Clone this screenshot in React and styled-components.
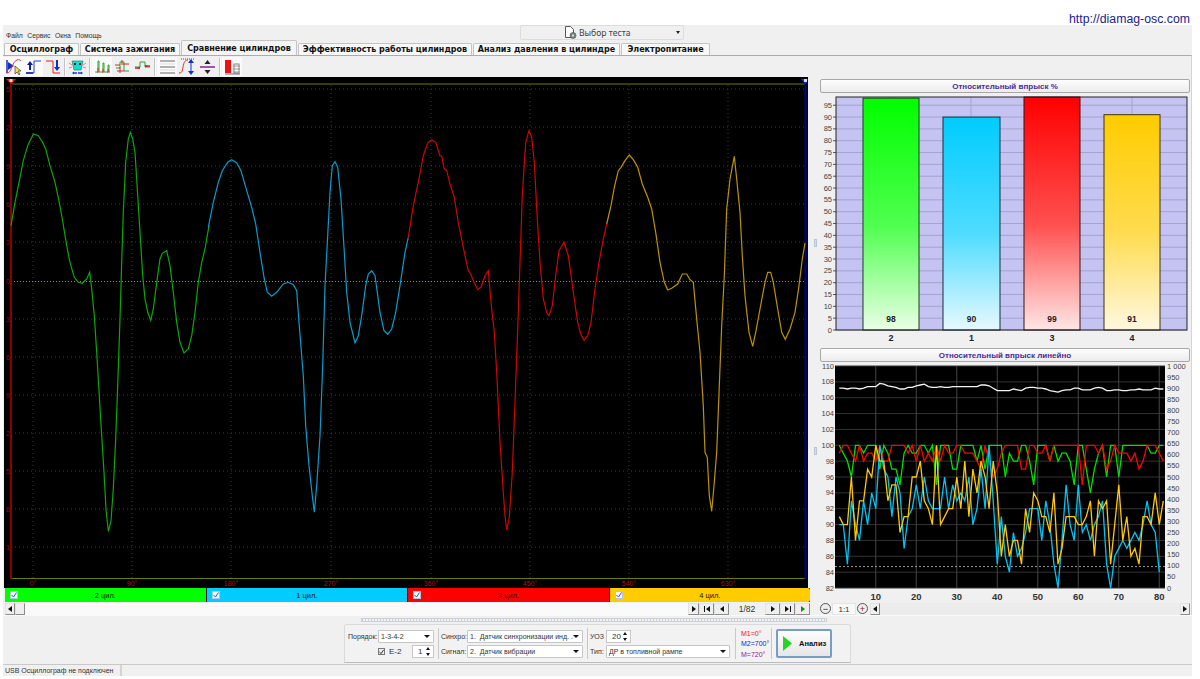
import React from "react";
import styled, { createGlobalStyle } from "styled-components";

const GlobalStyle = createGlobalStyle`
  html, body { margin: 0; padding: 0; background: #fff; }
  body { font-family: "Liberation Sans", Arial, sans-serif; overflow: hidden; }
`;

const Page = styled.div`
  width: 1200px;
  height: 679px;
  display: flex;
  flex-direction: column;
`;

const TopBar = styled.div`
  height: 25px;
  display: flex;
  justify-content: flex-end;
  align-items: flex-end;
  padding-right: 10px;
  box-sizing: border-box;
`;

const SiteLink = styled.a`
  font-size: 12.3px;
  line-height: 15px;
  color: #1c1c8c;
  text-decoration: none;
  position: relative;
  top: 2px;
`;

const Window = styled.div`
  margin: 0 8px 0 3px;
  height: 651px;
  background: #f0f0f0;
  display: flex;
  flex-direction: column;
`;

const MenuRow = styled.div`
  height: 17px;
  display: flex;
  align-items: flex-start;
`;

const Menu = styled.div`
  width: 517px;
  display: flex;
  gap: 4.5px;
  padding: 6px 0 0 3px;
  box-sizing: border-box;
  font-size: 6.8px;
  line-height: 9px;
  color: #333;
`;

const TestSelect = styled.div`
  width: 164px;
  height: 15px;
  box-sizing: border-box;
  border: 1px solid #dcdcdc;
  border-radius: 2px;
  display: flex;
  align-items: center;
  padding-left: 43px;
  gap: 2px;
  font-family: "Noto Sans", sans-serif;
  font-size: 8.6px;
  color: #444;
  position: relative;
`;

const SelectCaret = styled.span`
  position: absolute;
  right: 3px;
  top: 5px;
  border: 2.5px solid transparent;
  border-top: 3px solid #222;
`;

const TabRow = styled.div`
  height: 14px;
  display: flex;
  align-items: flex-end;
  padding-left: 1px;
  gap: 1px;
`;

const Tab = styled.div`
  width: ${(p) => p.$w}px;
  height: ${(p) => (p.$active ? 15 : 12)}px;
  box-sizing: border-box;
  background: ${(p) => (p.$active ? "#f4f4f4" : "#f8f8f8")};
  border: 1px solid #c4c4c4;
  border-bottom: none;
  border-radius: 2px 2px 0 0;
  display: flex;
  align-items: center;
  justify-content: center;
  font-family: "DejaVu Sans", sans-serif;
  font-weight: 700;
  font-size: 8px;
  color: #111;
  white-space: nowrap;
  position: relative;
  z-index: ${(p) => (p.$active ? 1 : 0)};
`;

const TabPanel = styled.div`
  height: 560px;
  box-sizing: border-box;
  border-top: 1px solid #ababab;
  border-right: 1px solid #d4d4d4;
  display: flex;
  flex-direction: column;
`;

const Toolbar = styled.div`
  height: 21px;
  display: flex;
  align-items: center;
  flex: none;
`;

const Tool = styled.div`
  width: 20px;
  height: 19px;
  display: flex;
  align-items: center;
  justify-content: center;
  background: ${(p) => (p.$lit ? "#fafafa" : "transparent")};
`;

const ToolSep = styled.div`
  width: 2px;
  height: 18px;
  margin: 0 ${(p) => p.$m || 1.5}px;
  background: #c2c2c2;
  border-right: 1px solid #fff;
  box-sizing: border-box;
`;

const Workspace = styled.div`
  flex: 1;
  display: flex;
  min-height: 0;
`;

const ScopeColumn = styled.div`
  width: 807px;
  margin-left: 1px;
  flex: none;
  display: flex;
  flex-direction: column;
`;

const ScopeFrame = styled.div`
  height: 511px;
  flex: none;
  svg { display: block; }
`;

const CylinderStrip = styled.div`
  height: 14px;
  margin: 0 1px;
  display: flex;
  flex: none;
  background: #111;
  gap: 1px;
`;

const Cylinder = styled.div`
  flex: 1;
  background: ${(p) => p.$color};
  display: flex;
  align-items: center;
  justify-content: center;
  font-size: 7.5px;
  color: #1c1c00;
  position: relative;
  border-radius: ${(p) => (p.$last ? "0 2px 2px 0" : "0")};
`;

const CheckBox = styled.span`
  position: absolute;
  left: 5px;
  top: 3px;
  width: 8px;
  height: 8px;
  background: #f2f6fc;
  border: 1px solid #b8c4d4;
  box-sizing: border-box;
  display: flex;
  svg { display: block; }
`;

const NavRow = styled.div`
  flex: 1;
  display: flex;
  align-items: stretch;
  margin: 1px 1px 0;
  height: 12px;
`;

const ScrollTrack = styled.div`
  flex: ${(p) => (p.$fill ? 1 : "none")};
  background: ${(p) => p.$bg || "#f9f9f9"};
  display: flex;
  align-items: stretch;
`;

const SquareButton = styled.div`
  width: ${(p) => p.$w || 13}px;
  box-sizing: border-box;
  border: 1px solid #e2e2e2;
  border-right-color: #8c8c8c;
  border-bottom-color: #8c8c8c;
  background: ${(p) => p.$bg || "#efefef"};
  display: flex;
  align-items: center;
  justify-content: center;
  flex: none;
  margin-left: ${(p) => p.$ml || 0}px;
`;

const PageCount = styled.div`
  width: 36px;
  flex: none;
  display: flex;
  align-items: center;
  justify-content: center;
  font-size: 8.5px;
  color: #333;
`;

const Splitter = styled.div`
  width: 9px;
  flex: none;
  position: relative;
`;

const Knob = styled.div`
  position: absolute;
  left: 3px;
  top: ${(p) => p.$top}px;
  width: 3px;
  height: ${(p) => p.$h}px;
  background: #cfe0f2;
  border: 1px solid #b8c4d4;
  box-sizing: border-box;
`;

const Sidebar = styled.div`
  width: 370px;
  flex: none;
  padding-top: 2px;
  box-sizing: border-box;
  display: flex;
  flex-direction: column;
  svg { display: block; overflow: visible; }
`;

const ChartTitle = styled.div`
  height: 14px;
  flex: none;
  margin-bottom: 2px;
  box-sizing: border-box;
  border: 1px solid #a8a8a8;
  border-radius: 2px;
  background: linear-gradient(#fdfdfd, #ececec);
  display: flex;
  align-items: center;
  justify-content: center;
  font-size: 8px;
  font-weight: 700;
  color: #4a2c96;
`;

const ChartFooter = styled.div`
  height: 12px;
  flex: none;
  display: flex;
  align-items: stretch;
`;

const RoundButton = styled.div`
  width: 11px;
  height: 11px;
  box-sizing: border-box;
  border: 1px solid #555;
  border-radius: 50%;
  background: #eee;
  display: flex;
  align-items: center;
  justify-content: center;
  flex: none;
  margin: 0 1px 0 0;
  color: ${(p) => p.$color};
  font-size: 9px;
  line-height: 8px;
`;

const ZoomValue = styled.div`
  width: 24px;
  flex: none;
  margin-right: 1px;
  background: #f8f8f8;
  border: 1px solid #e4e4e4;
  box-sizing: border-box;
  display: flex;
  align-items: center;
  justify-content: center;
  font-size: 8px;
  color: #333;
`;

const BottomArea = styled.div`
  height: 48px;
  flex: none;
  display: flex;
  flex-direction: column;
  align-items: center;
  border-top: 1px solid #fafafa;
`;

const DockHandle = styled.div`
  width: 466px;
  height: 4px;
  margin: 2px 7px 2px 0;
  flex: none;
  box-sizing: border-box;
  border: 1px solid #cfcfcf;
  background: repeating-linear-gradient(90deg, #b8d0ea 0 1px, #f4f4f4 1px 3px);
`;

const ControlPanel = styled.div`
  width: 507px;
  height: 39px;
  flex: none;
  box-sizing: border-box;
  border: 1px solid #dadada;
  border-bottom-color: #bcbcbc;
  border-radius: 3px 3px 0 0;
  padding: 0 0 0 3px;
  display: flex;
  align-items: center;
  background: #f2f2f2;
`;

const FieldGroup = styled.div`
  width: ${(p) => p.$w}px;
  flex: none;
  display: grid;
  grid-template-columns: ${(p) => p.$label}px 1fr;
  grid-template-rows: 13px 13px;
  row-gap: 2px;
  align-items: center;
`;

const FieldLabel = styled.div`
  font-size: 7px;
  color: #333;
  white-space: nowrap;
`;

const SelectBox = styled.div`
  height: 13px;
  box-sizing: border-box;
  background: #fff;
  border: 1px solid #c6c6c6;
  border-radius: 1px;
  display: flex;
  align-items: center;
  padding-left: 2px;
  font-size: 7px;
  color: #333;
  white-space: pre;
  overflow: hidden;
  position: relative;
  &::after {
    content: "";
    position: absolute;
    right: 3px;
    top: 4px;
    border: 3px solid transparent;
    border-top: 3px solid #111;
  }
`;

const SpinBox = styled.div`
  width: ${(p) => p.$w}px;
  height: 13px;
  box-sizing: border-box;
  background: #fff;
  border: 1px solid #c6c6c6;
  display: flex;
  align-items: center;
  padding-left: 5px;
  font-size: 8px;
  color: #333;
  position: relative;
  &::before, &::after {
    content: "";
    position: absolute;
    right: 3px;
    border: 2.5px solid transparent;
  }
  &::before { top: -1px; border-bottom: 3px solid #111; }
  &::after { bottom: -1px; border-top: 3px solid #111; }
`;

const OrderExtras = styled.div`
  display: flex;
  align-items: center;
  justify-content: space-between;
`;

const PlainCheck = styled.label`
  display: flex;
  align-items: center;
  gap: 4px;
  font-size: 8px;
  color: #333;
`;

const PanelCheck = styled.span`
  width: 7px;
  height: 7px;
  box-sizing: border-box;
  border: 1px solid #777;
  background: #eee;
  display: flex;
  svg { display: block; }
`;

const PanelSep = styled.div`
  width: 1px;
  height: 31px;
  background: #c8c8c8;
  flex: none;
  margin: 0 ${(p) => p.$r}px 0 ${(p) => p.$l}px;
`;

const Marks = styled.div`
  width: 30px;
  flex: none;
  display: flex;
  flex-direction: column;
  gap: 1.5px;
`;

const Mark = styled.div`
  font-size: 7px;
  line-height: 9px;
  color: ${(p) => p.$color};
  white-space: nowrap;
`;

const AnalyzeButton = styled.div`
  width: 56px;
  height: 29px;
  flex: none;
  box-sizing: border-box;
  border: 2px solid #7a9cc0;
  border-radius: 2px;
  background: linear-gradient(#fdfdfd, #e6e6e6);
  display: flex;
  align-items: center;
  padding-left: 5px;
  gap: 7px;
  font-size: 7.5px;
  font-weight: 700;
  color: #111;
`;

const StatusBar = styled.div`
  height: 12px;
  flex: none;
  box-sizing: border-box;
  border-top: 1px solid #c8c8c8;
  display: flex;
  font-size: 7px;
  color: #333;
`;

const StatusCell = styled.div`
  width: 119px;
  padding-left: 2px;
  box-sizing: border-box;
  line-height: 11px;
  white-space: nowrap;
  border-right: 2px solid #d4d4d4;
`;

/* ---------- waveform data, read off the picture (zoom coords) ---------- */

const wave = (base, pts) =>
  pts.map(([x, y]) => `${(base + x / 3).toFixed(1)},${(120 + y / 3).toFixed(1)}`).join(" ");

const greenWave = wave(5, [[18,320],[30,250],[42,190],[55,125],[68,80],[85,45],[100,50],[112,68],[122,90],[135,140],[150,190],[160,235],[172,300],[185,380],[195,430],[208,475],[220,490],[232,493],[245,480],[254,460],[260,510],[268,590],[275,700],[283,830],[290,950],[297,1060],[303,1170],[310,1237],[318,1205],[325,1110],[332,960],[338,800],[345,600],[350,430],[355,280],[362,130],[370,60],[376,40],[383,60],[390,100],[397,210],[405,340],[413,470],[420,540],[428,580],[437,604],[445,570],[455,490],[465,420],[472,403],[485,395],[495,440],[505,520],[515,610],[525,670],[537,702],[550,690],[560,650],[570,580],[580,490],[590,430],[600,390],[612,320]]);
const blueWave = wave(205, [[10,325],[25,250],[40,190],[52,155],[68,130],[80,122],[95,132],[108,155],[125,215],[140,265],[152,315],[165,400],[178,480],[187,520],[200,532],[215,520],[235,495],[250,490],[265,497],[275,515],[282,610],[295,770],[302,920],[312,1040],[322,1130],[328,1180],[335,1100],[345,950],[353,740],[360,500],[368,350],[375,220],[382,140],[390,128],[398,145],[408,240],[418,400],[425,520],[435,610],[450,672],[460,650],[470,590],[482,500],[490,465],[500,455],[510,470],[525,580],[537,635],[548,646],[560,630],[572,580],[585,500],[600,400],[610,355]]);
const redWave = wave(405, [[10,355],[25,260],[42,180],[55,110],[68,72],[80,62],[92,70],[105,110],[110,112],[118,150],[125,155],[135,195],[148,235],[160,310],[172,370],[180,410],[190,455],[197,465],[207,490],[218,512],[228,505],[240,470],[250,455],[258,550],[268,640],[275,760],[285,970],[295,1120],[300,1190],[305,1232],[313,1195],[322,1060],[330,850],[338,630],[345,430],[352,230],[362,70],[372,35],[380,55],[388,130],[397,300],[405,430],[415,540],[425,580],[432,590],[442,560],[452,470],[462,395],[477,370],[490,410],[505,520],[518,610],[527,645],[537,664],[548,650],[558,610],[570,510],[582,430],[595,360],[605,315]]);
const yellowWave = wave(605, [[5,315],[18,260],[28,205],[40,155],[48,145],[60,125],[73,108],[85,122],[98,145],[112,195],[128,235],[140,270],[152,340],[165,430],[178,490],[188,513],[200,508],[218,495],[232,465],[245,465],[255,482],[265,490],[275,600],[285,700],[295,860],[300,1000],[307,1015],[313,1130],[320,1177],[327,1100],[335,1000],[343,800],[350,620],[358,470],[365,270],[375,180],[388,112],[395,180],[405,280],[412,410],[420,530],[432,640],[443,682],[452,640],[465,570],[480,490],[488,460],[497,460],[505,490],[518,570],[530,640],[541,661],[555,630],[570,580],[582,500],[592,420],[600,372]]);

const scopeRows = [90, 128, 167, 205, 243, 282, 320, 358, 396, 434, 472, 510, 548];
const scopeRowLabels = ["5", "2", "9", "6", "3", "0", "3", "6", "9", "2", "5", "8", "1"];
const scopeCols = [33, 132, 231, 331, 431, 530, 629, 728];
const scopeColLabels = ["0°", "90°", "180°", "270°", "360°", "450°", "540°", "630°"];

const Scope = () => (
  <svg width="804" height="511" viewBox="4 78 804 511" fontFamily="Liberation Sans, sans-serif" style={{ background: "#000" }}>
    {scopeRows.map((y, i) =>
      i === 5 ? null : (
        <line key={y} x1="11" x2="805" y1={y} y2={y} stroke="#3a3a3a" strokeWidth="1" strokeDasharray="1 3" />
      )
    )}
    {scopeCols.map((x) => (
      <line key={x} x1={x} x2={x} y1="86" y2="579" stroke="#3a3a3a" strokeWidth="1" strokeDasharray="1 3" />
    ))}
    <line x1="11" x2="805" y1="282.5" y2="282.5" stroke="#969630" strokeDasharray="1 2" />
    <line x1="11" x2="805" y1="85" y2="85" stroke="#6b7a00" />
    <line x1="11" x2="805" y1="579.5" y2="579.5" stroke="#6b7a00" />
    <line x1="11" x2="11" y1="80" y2="580" stroke="#8b0000" strokeWidth="2" />
    <line x1="805.5" x2="805.5" y1="80" y2="580" stroke="#00008f" strokeWidth="2" />
    <polygon points="6,80 16,80 11,85" fill="#ff1010" />
    <polygon points="801,80 808,80 805.5,85" fill="#1030ff" />
    <rect x="9.5" y="80" width="3" height="3" fill="#ffd0d0" />
    <rect x="804" y="80" width="3" height="3" fill="#d0d8ff" />
    {scopeRowLabels.map((t, i) => (
      <text key={i} x="6" y={scopeRows[i] + 2.5} fontSize="7" fill="#8c1010">{t}</text>
    ))}
    {scopeColLabels.map((t, i) => (
      <text key={t} x={scopeCols[i]} y="587" fontSize="7" fill="#b01010" textAnchor="middle">{t}</text>
    ))}
    <polyline points={greenWave} fill="none" stroke="#0aa80a" strokeWidth="1.2" />
    <polyline points={blueWave} fill="none" stroke="#0a9ccc" strokeWidth="1.2" />
    <polyline points={redWave} fill="none" stroke="#cc0606" strokeWidth="1.2" />
    <polyline points={yellowWave} fill="none" stroke="#bc9400" strokeWidth="1.2" />
  </svg>
);

/* ---------- bar chart ---------- */

const bars = [
  { label: "2", value: 98, x: 863, w: 56, top: "#00ff00", mid: "#50ff50", bottom: "#eaffe6", stroke: "#1c3c1c" },
  { label: "1", value: 90, x: 943, w: 57, top: "#00ccff", mid: "#50dcff", bottom: "#e6f9ff", stroke: "#12303c" },
  { label: "3", value: 99, x: 1024, w: 56, top: "#ff0000", mid: "#ff5050", bottom: "#ffe6e6", stroke: "#3c1212" },
  { label: "4", value: 91, x: 1104, w: 56, top: "#ffcc00", mid: "#ffdc50", bottom: "#fff8e0", stroke: "#3c3212" },
];

const barY = (v) => Math.max(98, 331 - v * 2.366);
const ticks = Array.from({ length: 20 }, (_, i) => i * 5);

const BarChart = () => (
  <svg width="370" height="253" viewBox="820 96 370 253" fontFamily="Liberation Sans, sans-serif">
    <defs>
      {bars.map((b) => (
        <linearGradient key={b.label} id={`bar${b.label}`} x1="0" x2="0" y1="0" y2="1">
          <stop offset="0" stopColor={b.top} />
          <stop offset="0.55" stopColor={b.mid} />
          <stop offset="1" stopColor={b.bottom} />
        </linearGradient>
      ))}
    </defs>
    <rect x="836" y="98" width="351" height="233" fill="#c5c3f2" />
    {ticks.map((v) => (
      <line key={v} x1="836" x2="1187" y1={barY(v)} y2={barY(v)} stroke="#a5a3cc" strokeWidth="1" />
    ))}
    {bars.map((b) => (
      <line key={b.label} x1={b.x + 28} x2={b.x + 28} y1="98" y2="331" stroke="#a5a3cc" />
    ))}
    {ticks.map((v) => (
      <g key={v}>
        <line x1="833" x2="836" y1={barY(v)} y2={barY(v)} stroke="#555" />
        <text x="832" y={barY(v) + 2.5} fontSize="7.5" fill="#444" textAnchor="end">{v}</text>
      </g>
    ))}
    {bars.map((b) => (
      <g key={b.label}>
        <rect x={b.x} y={barY(b.value)} width={b.w} height={331 - barY(b.value)} fill={`url(#bar${b.label})`} stroke={b.stroke} />
        <text x={b.x + b.w / 2} y="323" fontSize="8.5" fontWeight="700" fill="#222" textAnchor="middle">{b.value}</text>
        <text x={b.x + b.w / 2} y="342" fontSize="9" fontWeight="700" fill="#222" textAnchor="middle">{b.label}</text>
      </g>
    ))}
    <rect x="836" y="98" width="351" height="233" fill="none" stroke="#222" />
  </svg>
);

/* ---------- line chart ---------- */

const lineGreen = [100,99,98,96,100,100,99,100,100,100,97,100,99,97,97,95,99,100,99,99,100,100,99,100,95,100,100,100,97,97,100,100,100,100,98,100,97,100,100,100,100,96,99,98,98,100,100,98,95,100,100,100,98,100,98,99,99,98,95,100,100,97,94,97,99,100,96,100,100,96,100,100,100,100,100,100,100,99,99,100,100];
const lineRed = [99,100,100,99,98,100,98,99,99,98,100,98,98,100,100,100,100,99,100,98,100,98,99,98,100,98,100,99,99,100,100,99,99,99,98,97,100,98,96,97,99,100,100,100,100,97,97,100,100,99,99,100,98,100,100,100,100,100,100,100,95,100,100,100,99,100,97,98,100,99,99,99,98,99,97,98,100,100,100,99,98];
const lineBlue = [90,90,85,93,90,88,93,90,94,92,100,97,96,91,96,94,87,91,92,95,92,96,93,92,92,92,96,92,95,93,94,93,96,90,92,97,92,100,93,85,91,86,84,89,86,87,89,92,92,92,88,93,90,85,82,88,95,90,88,95,89,90,88,90,91,93,85,82,86,87,88,87,88,89,88,90,93,90,89,84];
const lineYellow = [91,90,90,96,88,93,93,97,96,100,98,98,93,95,95,89,91,91,96,96,98,93,92,90,100,90,91,92,92,96,92,98,91,97,94,98,96,92,98,94,86,90,86,88,88,85,92,89,94,93,91,91,89,94,85,87,91,91,91,90,90,91,93,86,93,92,93,85,90,95,88,91,86,87,85,91,91,90,94,90,93];
const lineWhite = [107.2,107.2,107.1,107.2,107.2,107.1,107.2,107.4,107.4,107.4,107.8,107.7,107.5,107.4,107.3,107.1,107.1,107.3,107.3,107.5,107.6,107.7,107.4,107.3,107.3,107.4,107.3,107.3,107.4,107.4,107.4,107.4,107.4,107.4,107.4,107.6,107.6,107.5,107.2,106.9,106.9,106.9,106.9,107.1,107,106.9,107.2,107.3,107.3,107.2,107.2,107.1,106.9,106.8,106.7,106.9,107,107,107.2,107.2,107,107,107,107.2,107.3,107.2,106.9,106.9,107,107,106.9,106.9,107,107,107.1,107,107,107,107.2,107.1,107.1];

const lineX = (n) => 839.3 + (n - 1) * 4.05;
const lineY = (v) => 589 - ((v - 82) * 222) / 28;
const toPoints = (arr) => arr.map((v, i) => `${lineX(i + 1).toFixed(1)},${lineY(v).toFixed(1)}`).join(" ");

const leftAxis = Array.from({ length: 15 }, (_, i) => 82 + i * 2);
const rightAxis = Array.from({ length: 21 }, (_, i) => i * 50);

const LineChart = () => (
  <svg width="370" height="239" viewBox="820 365 370 239" fontFamily="Liberation Sans, sans-serif">
    <rect x="835" y="367" width="330" height="222" fill="#000" />
    {leftAxis.map((v) => (
      <g key={v}>
        <line x1="835" x2="1165" y1={lineY(v)} y2={lineY(v)} stroke="#333" />
        <text x="834" y={lineY(v) + 2.5} fontSize="7.5" fill="#444" textAnchor="end">{v}</text>
      </g>
    ))}
    {rightAxis.map((v) => (
      <text key={v} x="1167" y={589 - v * 0.222 + 2.5} fontSize="7.5" fill="#444">
        {v === 1000 ? "1 000" : v}
      </text>
    ))}
    {[10, 20, 30, 40, 50, 60, 70, 80].map((n) => (
      <g key={n}>
        <line x1={lineX(n)} x2={lineX(n)} y1="367" y2="589" stroke="#444" />
        <text x={lineX(n)} y="601" fontSize="9.5" fontWeight="700" fill="#333" textAnchor="middle">{n}</text>
      </g>
    ))}
    <line x1="835" x2="1165" y1={lineY(84.7)} y2={lineY(84.7)} stroke="#999" strokeDasharray="2 2" />
    <polyline points={toPoints(lineWhite)} fill="none" stroke="#f4f4f4" strokeWidth="1.3" />
    <polyline points={toPoints(lineGreen)} fill="none" stroke="#00e000" strokeWidth="1.3" />
    <polyline points={toPoints(lineRed)} fill="none" stroke="#ff0000" strokeWidth="1.3" />
    <polyline points={toPoints(lineBlue)} fill="none" stroke="#00c4f4" strokeWidth="1.3" />
    <polyline points={toPoints(lineYellow)} fill="none" stroke="#ffc800" strokeWidth="1.3" />
  </svg>
);

/* ---------- small drawings ---------- */

const toolIcons = [
  <>
    <path d="M2 2v13" stroke="#1030c0" strokeWidth="1.5" />
    <path d="M3 4l6 4-6 4z" fill="#1030c0" />
    <path d="M1 15c3 0 4-1 6-6s3-6 5-7 3 0 4 1" fill="none" stroke="#e83030" />
    <path d="M10 8l0 8 2-2 2 3 1-1-2-3 3 0z" fill="#f4e040" stroke="#222" strokeWidth="0.6" />
  </>,
  <>
    <path d="M1 15h8V3h7" fill="none" stroke="#2040d0" />
    <path d="M5 3l-3 4h2v5h2V7h2z" fill="#102090" />
    <path d="M1 15h7" stroke="#102090" strokeWidth="1.5" />
  </>,
  <>
    <path d="M1 3h7v12h7" fill="none" stroke="#e02020" />
    <path d="M11 2h2v7h2l-3 4-3-4h2z" fill="#1030c0" />
  </>,
  <>
    <path d="M3 3h11l-2 9H5z" fill="#20d8d0" stroke="#207050" strokeWidth="0.6" />
    <rect x="5" y="5" width="2" height="2" fill="#103030" />
    <rect x="10" y="5" width="2" height="2" fill="#103030" />
    <path d="M0 5l3 2M17 5l-3 2M0 10l3-1M17 10l-3-1" stroke="#e05050" strokeWidth="0.7" />
    <path d="M4 15h4M9 15h4" stroke="#2040c0" strokeWidth="1.5" />
    <path d="M3 15l2-1.5v3zM14 15l-2-1.5v3z" fill="#2040c0" />
  </>,
  <>
    <path d="M1 14h3V3h1v11h4V5h1v9h4V7h1v7h1" fill="none" stroke="#30a030" />
    <path d="M4 10v5M9 11v4M14 11v4" stroke="#e02020" />
  </>,
  <>
    <path d="M2 10h4V4h4v9h5" fill="none" stroke="#30a030" />
    <path d="M1 7h5M9 6h6M3 13h7M8 2v5M6 9v6" stroke="#e02020" />
  </>,
  <>
    <path d="M1 9h5V4h5v5h5" fill="none" stroke="#30a030" />
    <path d="M1 10h5M11 8h5" stroke="#e02020" strokeWidth="1.6" />
    <path d="M6 11l-3-1 3-1.5zM11 7l3 1-3 1.5z" fill="#e02020" />
  </>,
  <>
    <path d="M1 3h15M1 9h15M1 15h15" stroke="#666" />
    <path d="M1 6h15M1 12h15" stroke="#ddd" />
  </>,
  <>
    <path d="M0 15c3 0 3-1 4-6s2-7 5-7" fill="none" stroke="#e83030" />
    <path d="M2 1h14" stroke="#555" strokeDasharray="1 1" />
    <path d="M12 3v12" stroke="#1030d0" />
    <path d="M12 1l3 4H9zM12 17l3-4H9z" fill="#1030d0" />
  </>,
  <>
    <path d="M1 9h15" stroke="#801090" strokeWidth="1.4" />
    <path d="M8.500 2l3 4h-6zM8.500 16l3-4h-6z" fill="#222" />
  </>,
  <>
    <rect x="1" y="2" width="6" height="13" fill="#f01010" />
    <path d="M9 8h7M9 11h7M9 14h7" stroke="#999" />
    <rect x="10" y="6" width="5" height="9" fill="none" stroke="#888" />
    <path d="M1 16h15" stroke="#666" />
  </>,
];

const ToolIcon = ({ index }) => (
  <svg width="17" height="17" viewBox="0 0 17 17">{toolIcons[index]}</svg>
);

const navGlyphs = {
  left: "M6 1L2 4l4 3z",
  right: "M2 1l4 3-4 3z",
  first: "M1 1h1v6H1zM7 1L3 4l4 3z",
  last: "M7 1H6v6h1zM1 1l4 3-4 3z",
};

const NavGlyph = ({ name, color = "#111" }) => (
  <svg width="8" height="8" viewBox="0 0 8 8">
    <path d={navGlyphs[name]} fill={color} />
  </svg>
);

const Tick = ({ color }) => (
  <svg width="6" height="6" viewBox="0 0 6 6">
    <path d="M0.500 3l2 2 3-4.500" fill="none" stroke={color} strokeWidth="1" />
  </svg>
);

const tabs = [
  { label: "Осциллограф", w: 75 },
  { label: "Система зажигания", w: 100 },
  { label: "Сравнение цилиндров", w: 116, active: true },
  { label: "Эффективность работы цилиндров", w: 174 },
  { label: "Анализ давления в цилиндре", w: 147 },
  { label: "Электропитание", w: 89 },
];

const cylinders = [
  { label: "2 цил.", color: "#00ff00" },
  { label: "1 цил.", color: "#00ccff" },
  { label: "3 цил.", color: "#ff0000" },
  { label: "4 цил.", color: "#ffcc00", last: true },
];

export default function App() {
  return (
    <Page>
      <GlobalStyle />
      <TopBar>
        <SiteLink href="#">http://diamag-osc.com</SiteLink>
      </TopBar>
      <Window>
        <MenuRow>
          <Menu>
            <span>Файл</span>
            <span>Сервис</span>
            <span>Окна</span>
            <span>Помощь</span>
          </Menu>
          <TestSelect>
            <svg width="13" height="13" viewBox="0 0 13 13">
              <path d="M1.500 0.500h5l3 3v8h-8z" fill="#fff" stroke="#555" />
              <circle cx="9" cy="9.500" r="3" fill="#7c8a7c" stroke="#445" strokeWidth="0.6" />
              <circle cx="9" cy="9.500" r="1" fill="#e8e8e8" />
            </svg>
            Выбор теста
            <SelectCaret />
          </TestSelect>
        </MenuRow>
        <TabRow>
          {tabs.map((t) => (
            <Tab key={t.label} $w={t.w} $active={t.active}>{t.label}</Tab>
          ))}
        </TabRow>
        <TabPanel>
          <Toolbar>
            <Tool $lit><ToolIcon index={0} /></Tool>
            <Tool $lit><ToolIcon index={1} /></Tool>
            <Tool><ToolIcon index={2} /></Tool>
            <ToolSep $m={1} />
            <Tool><ToolIcon index={3} /></Tool>
            <ToolSep />
            <Tool $lit><ToolIcon index={4} /></Tool>
            <Tool><ToolIcon index={5} /></Tool>
            <Tool><ToolIcon index={6} /></Tool>
            <ToolSep />
            <Tool $lit><ToolIcon index={7} /></Tool>
            <Tool><ToolIcon index={8} /></Tool>
            <Tool><ToolIcon index={9} /></Tool>
            <ToolSep />
            <Tool $lit><ToolIcon index={10} /></Tool>
          </Toolbar>
          <Workspace>
            <ScopeColumn>
              <ScopeFrame>
                <Scope />
              </ScopeFrame>
              <CylinderStrip>
                {cylinders.map((c) => (
                  <Cylinder key={c.label} $color={c.color} $last={c.last}>
                    <CheckBox><Tick color="#2060d0" /></CheckBox>
                    {c.label}
                  </Cylinder>
                ))}
              </CylinderStrip>
              <NavRow>
                <SquareButton $w={10}><NavGlyph name="left" /></SquareButton>
                <SquareButton $w={10} />
                <ScrollTrack $fill />
                <SquareButton $w={11}><NavGlyph name="right" /></SquareButton>
                <SquareButton $w={15}><NavGlyph name="first" /></SquareButton>
                <SquareButton $w={15}><NavGlyph name="left" /></SquareButton>
                <PageCount>1/82</PageCount>
                <SquareButton $w={15}><NavGlyph name="right" /></SquareButton>
                <SquareButton $w={15}><NavGlyph name="last" /></SquareButton>
                <SquareButton $w={15}><NavGlyph name="right" color="#109010" /></SquareButton>
              </NavRow>
            </ScopeColumn>
            <Splitter>
              <Knob $top={162} $h={8} />
              <Knob $top={370} $h={8} />
            </Splitter>
            <Sidebar>
              <ChartTitle>Относительный впрыск %</ChartTitle>
              <BarChart />
              <ChartTitle>Относительный впрыск линейно</ChartTitle>
              <LineChart />
              <ChartFooter>
                <RoundButton $color="#111">−</RoundButton>
                <ZoomValue>1:1</ZoomValue>
                <RoundButton $color="#a01020">+</RoundButton>
                <SquareButton $w={10} $ml={1}><NavGlyph name="left" /></SquareButton>
                <ScrollTrack $fill $bg="#ececec" />
                <SquareButton $w={10}><NavGlyph name="right" /></SquareButton>
              </ChartFooter>
            </Sidebar>
          </Workspace>
        </TabPanel>
        <BottomArea>
          <DockHandle />
          <ControlPanel>
            <FieldGroup $w={86} $label={30}>
              <FieldLabel>Порядок:</FieldLabel>
              <SelectBox>1-3-4-2</SelectBox>
              <span />
              <OrderExtras>
                <PlainCheck>
                  <PanelCheck><Tick color="#111" /></PanelCheck>
                  E-2
                </PlainCheck>
                <SpinBox $w={22}>1</SpinBox>
              </OrderExtras>
            </FieldGroup>
            <PanelSep $l={4} $r={2} />
            <FieldGroup $w={142} $label={26}>
              <FieldLabel>Синхро:</FieldLabel>
              <SelectBox>1.  Датчик синхронизации инд. .</SelectBox>
              <FieldLabel>Сигнал:</FieldLabel>
              <SelectBox>2.  Датчик вибрации</SelectBox>
            </FieldGroup>
            <PanelSep $l={4} $r={2} />
            <FieldGroup $w={140} $label={16}>
              <FieldLabel>УОЗ</FieldLabel>
              <SpinBox $w={25}>20</SpinBox>
              <FieldLabel>Тип:</FieldLabel>
              <SelectBox>ДР в топливной рампе</SelectBox>
            </FieldGroup>
            <PanelSep $l={5} $r={5} />
            <Marks>
              <Mark $color="#e81818">M1=0°</Mark>
              <Mark $color="#2020e0">M2=700°</Mark>
              <Mark $color="#902090">M=720°</Mark>
            </Marks>
            <PanelSep $l={0} $r={4} />
            <AnalyzeButton>
              <svg width="9" height="15" viewBox="0 0 9 15">
                <path d="M0 0l9 7.500-9 7.500z" fill="#22d622" />
              </svg>
              Анализ
            </AnalyzeButton>
          </ControlPanel>
        </BottomArea>
        <StatusBar>
          <StatusCell>USB Осциллограф не подключен</StatusCell>
        </StatusBar>
      </Window>
    </Page>
  );
}
